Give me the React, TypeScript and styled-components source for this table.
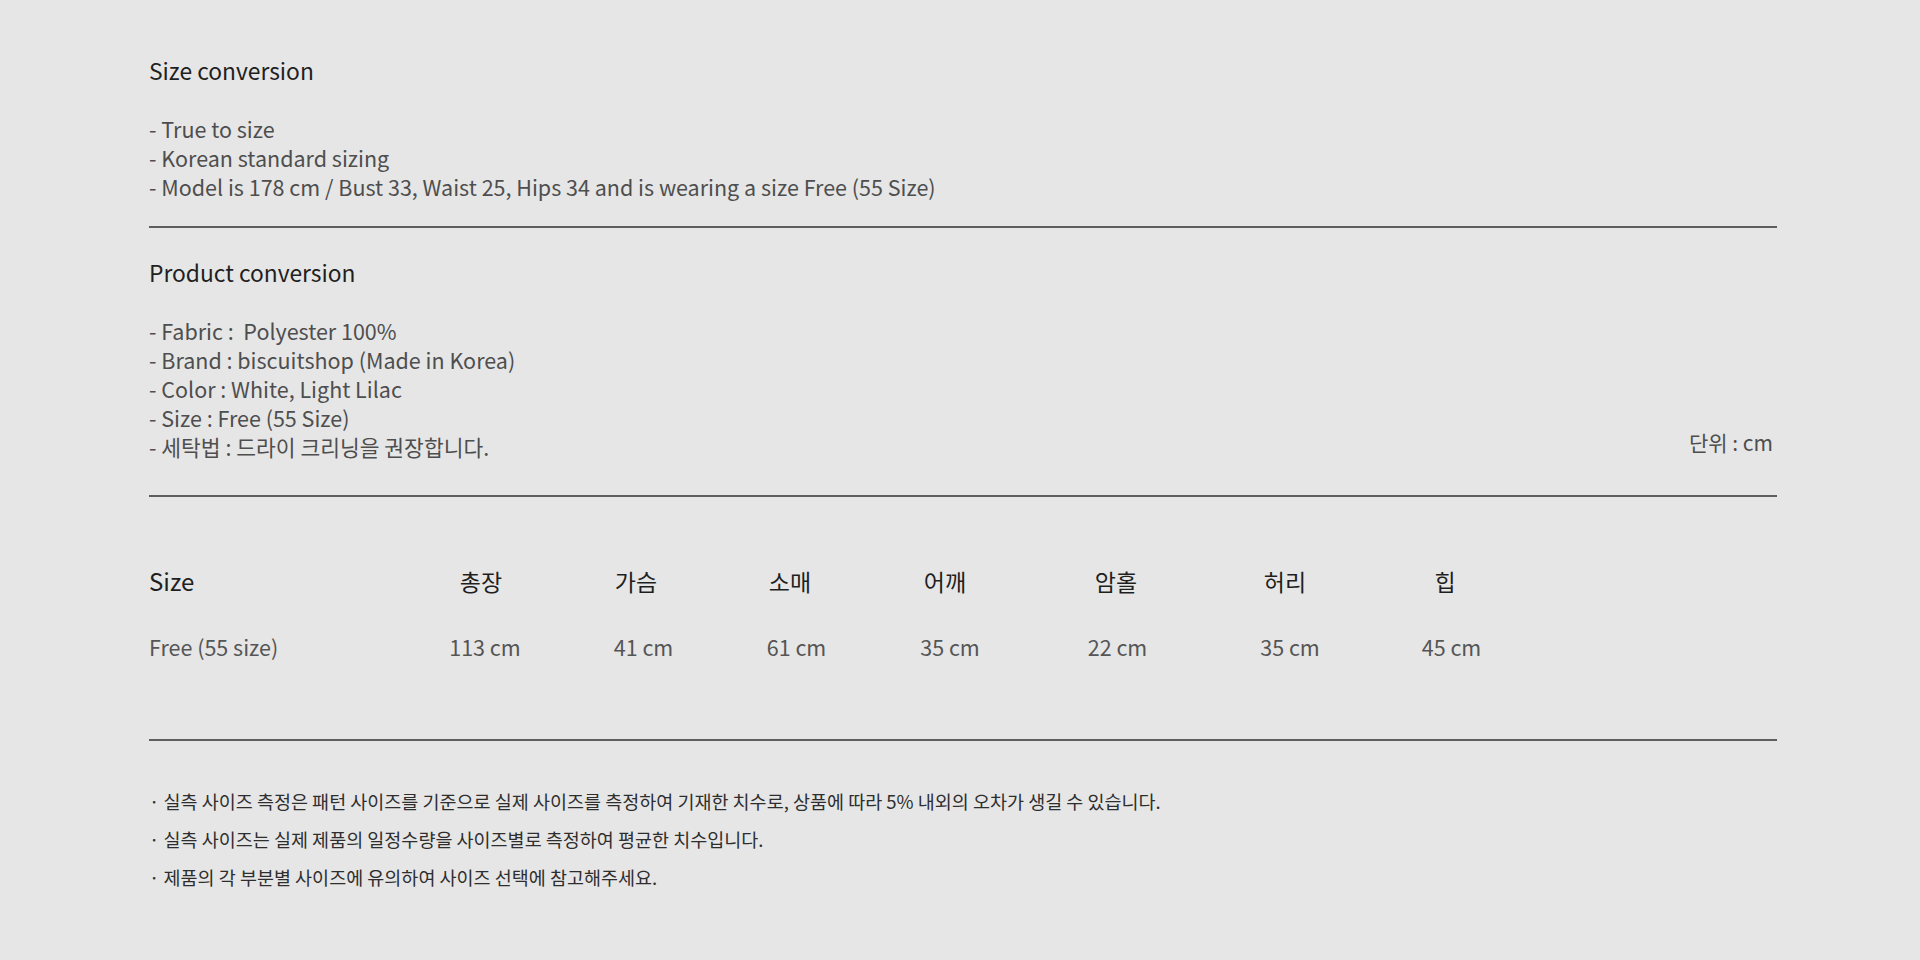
import React from "react";
import styled, { createGlobalStyle } from "styled-components";

const Global = createGlobalStyle`
  html, body {
    margin: 0;
    padding: 0;
    background: #e6e6e6;
  }
  body {
    font-family: "Noto Sans CJK KR", "Noto Sans", sans-serif;
    -webkit-font-smoothing: antialiased;
  }
`;

const Page = styled.main`
  width: 1920px;
  height: 960px;
  box-sizing: border-box;
  padding: 56px 143px 0 149px;
  background: #e6e6e6;
  display: flex;
  flex-direction: column;
`;

const Section = styled.section<{ $top: number }>`
  display: flex;
  flex-direction: column;
  padding-top: ${(p) => p.$top}px;
`;

const Heading = styled.h2`
  margin: 0;
  font-size: 22.8px;
  line-height: 30px;
  font-weight: 400;
  color: #1f1f1f;
`;

const InfoRow = styled.div<{ $top: number }>`
  display: flex;
  justify-content: space-between;
  align-items: flex-end;
  margin-top: ${(p) => p.$top}px;
`;

const List = styled.ul`
  margin: 0;
  padding: 0;
  list-style: none;
`;

const Item = styled.li`
  font-size: 21.5px;
  line-height: 29px;
  color: #4e4e4e;
  white-space: pre;
`;

const Unit = styled.span`
  font-size: 21px;
  line-height: 29px;
  color: #4e4e4e;
  margin-right: 4px;
  margin-bottom: 4px;
`;

const Divider = styled.hr<{ $top: number }>`
  margin: ${(p) => p.$top}px 0 0;
  border: none;
  height: 2px;
  background: #5e5e5e;
`;

const Table = styled.div`
  display: grid;
  grid-template-columns: 255px 154px 156px 152px 158px 184px 154px 166px 1fr;
  grid-auto-rows: 30px;
  row-gap: 36px;
  padding-top: 69px;
`;

const HeadCell = styled.div<{ $first?: boolean }>`
  font-size: ${(p) => (p.$first ? 24 : 23)}px;
  line-height: 30px;
  color: #1f1f1f;
  text-align: ${(p) => (p.$first ? "left" : "center")};
  white-space: nowrap;
`;

const ValueCell = styled.div<{ $first?: boolean; $pad: number }>`
  font-size: 21.5px;
  line-height: 30px;
  color: #555555;
  text-align: ${(p) => (p.$first ? "left" : "center")};
  padding-left: ${(p) => p.$pad}px;
  white-space: nowrap;
`;

const Notes = styled.ul`
  margin: 0;
  padding: 41px 0 0;
  list-style: none;
  display: flex;
  flex-direction: column;
`;

const Note = styled.li`
  font-size: 18.5px;
  line-height: 38px;
  color: #2e2e2e;
  white-space: nowrap;
`;

const sizeLines = [
  "- True to size",
  "- Korean standard sizing",
  "- Model is 178 cm / Bust 33, Waist 25, Hips 34 and is wearing a size Free (55 Size)",
];

const productLines = [
  "- Fabric :  Polyester 100%",
  "- Brand : biscuitshop (Made in Korea)",
  "- Color : White, Light Lilac",
  "- Size : Free (55 Size)",
  "- 세탁법 : 드라이 크리닝을 권장합니다.",
];

const headers = ["Size", "총장", "가슴", "소매", "어깨", "암홀", "허리", "힙"];
const values = [
  { v: "Free (55 size)", pad: 0 },
  { v: "113 cm", pad: 8 },
  { v: "41 cm", pad: 15 },
  { v: "61 cm", pad: 13 },
  { v: "35 cm", pad: 10 },
  { v: "22 cm", pad: 3 },
  { v: "35 cm", pad: 10 },
  { v: "45 cm", pad: 13 },
];

const notes = [
  "· 실측 사이즈 측정은 패턴 사이즈를 기준으로 실제 사이즈를 측정하여 기재한 치수로, 상품에 따라 5% 내외의 오차가 생길 수 있습니다.",
  "· 실측 사이즈는 실제 제품의 일정수량을 사이즈별로 측정하여 평균한 치수입니다.",
  "· 제품의 각 부분별 사이즈에 유의하여 사이즈 선택에 참고해주세요.",
];

export default function App() {
  return (
    <>
      <Global />
      <Page>
        <Section $top={0}>
          <Heading>Size conversion</Heading>
          <InfoRow $top={28}>
            <List>
              {sizeLines.map((l) => (
                <Item key={l}>{l}</Item>
              ))}
            </List>
          </InfoRow>
        </Section>
        <Divider $top={25} />
        <Section $top={30}>
          <Heading>Product conversion</Heading>
          <InfoRow $top={28}>
            <List>
              {productLines.map((l) => (
                <Item key={l}>{l}</Item>
              ))}
            </List>
            <Unit>단위 : cm</Unit>
          </InfoRow>
        </Section>
        <Divider $top={34} />
        <Table>
          {headers.map((h, i) => (
            <HeadCell key={h} $first={i === 0}>
              {h}
            </HeadCell>
          ))}
          <span />
          {values.map((c, i) => (
            <ValueCell key={i} $first={i === 0} $pad={c.pad}>
              {c.v}
            </ValueCell>
          ))}
          <span />
        </Table>
        <Divider $top={77} />
        <Notes>
          {notes.map((n) => (
            <Note key={n}>{n}</Note>
          ))}
        </Notes>
      </Page>
    </>
  );
}
